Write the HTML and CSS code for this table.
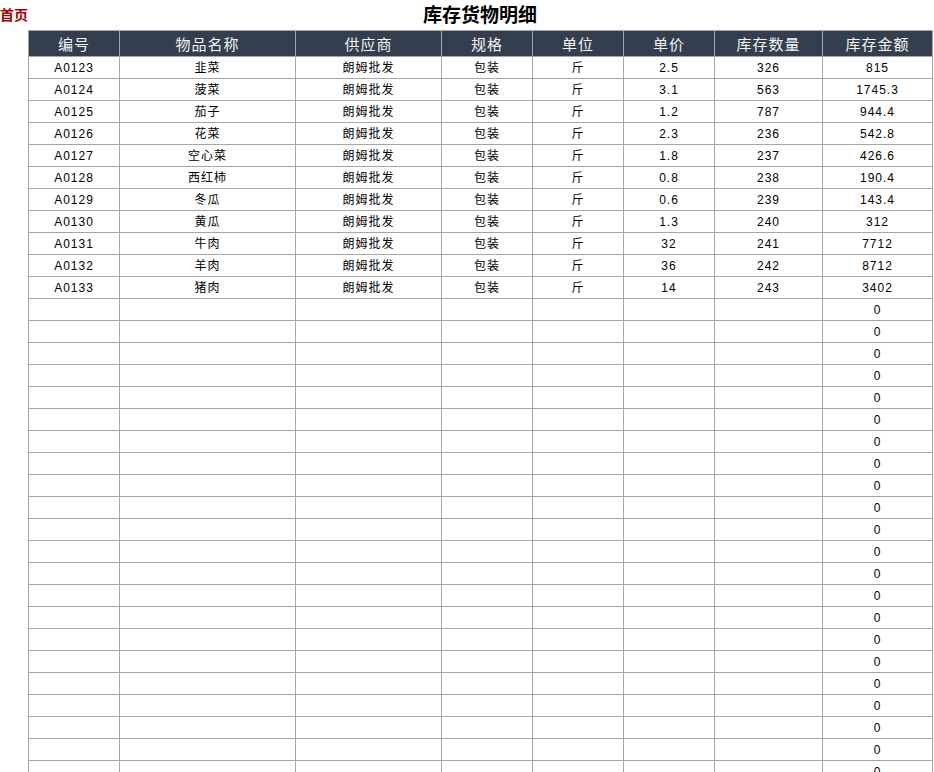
FILE: index.html
```html
<!DOCTYPE html>
<html lang="zh">
<head>
<meta charset="utf-8">
<title>库存货物明细</title>
<link rel="stylesheet" href="styles.css">
</head>
<body>
<div class="top">
  <a class="home" href="#">首页</a>
  <h1 class="title">库存货物明细</h1>
</div>
<table class="sheet">
  <colgroup>
    <col class="c1"><col class="c2"><col class="c3"><col class="c4"><col class="c5"><col class="c6"><col class="c7"><col class="c8">
  </colgroup>
  <thead>
    <tr><th>编号</th><th>物品名称</th><th>供应商</th><th>规格</th><th>单位</th><th>单价</th><th>库存数量</th><th>库存金额</th></tr>
  </thead>
  <tbody>
    <tr><td>A0123</td><td>韭菜</td><td>朗姆批发</td><td>包装</td><td>斤</td><td>2.5</td><td>326</td><td>815</td></tr>
    <tr><td>A0124</td><td>菠菜</td><td>朗姆批发</td><td>包装</td><td>斤</td><td>3.1</td><td>563</td><td>1745.3</td></tr>
    <tr><td>A0125</td><td>茄子</td><td>朗姆批发</td><td>包装</td><td>斤</td><td>1.2</td><td>787</td><td>944.4</td></tr>
    <tr><td>A0126</td><td>花菜</td><td>朗姆批发</td><td>包装</td><td>斤</td><td>2.3</td><td>236</td><td>542.8</td></tr>
    <tr><td>A0127</td><td>空心菜</td><td>朗姆批发</td><td>包装</td><td>斤</td><td>1.8</td><td>237</td><td>426.6</td></tr>
    <tr><td>A0128</td><td>西红柿</td><td>朗姆批发</td><td>包装</td><td>斤</td><td>0.8</td><td>238</td><td>190.4</td></tr>
    <tr><td>A0129</td><td>冬瓜</td><td>朗姆批发</td><td>包装</td><td>斤</td><td>0.6</td><td>239</td><td>143.4</td></tr>
    <tr><td>A0130</td><td>黄瓜</td><td>朗姆批发</td><td>包装</td><td>斤</td><td>1.3</td><td>240</td><td>312</td></tr>
    <tr><td>A0131</td><td>牛肉</td><td>朗姆批发</td><td>包装</td><td>斤</td><td>32</td><td>241</td><td>7712</td></tr>
    <tr><td>A0132</td><td>羊肉</td><td>朗姆批发</td><td>包装</td><td>斤</td><td>36</td><td>242</td><td>8712</td></tr>
    <tr><td>A0133</td><td>猪肉</td><td>朗姆批发</td><td>包装</td><td>斤</td><td>14</td><td>243</td><td>3402</td></tr>
    <tr><td></td><td></td><td></td><td></td><td></td><td></td><td></td><td>0</td></tr>
    <tr><td></td><td></td><td></td><td></td><td></td><td></td><td></td><td>0</td></tr>
    <tr><td></td><td></td><td></td><td></td><td></td><td></td><td></td><td>0</td></tr>
    <tr><td></td><td></td><td></td><td></td><td></td><td></td><td></td><td>0</td></tr>
    <tr><td></td><td></td><td></td><td></td><td></td><td></td><td></td><td>0</td></tr>
    <tr><td></td><td></td><td></td><td></td><td></td><td></td><td></td><td>0</td></tr>
    <tr><td></td><td></td><td></td><td></td><td></td><td></td><td></td><td>0</td></tr>
    <tr><td></td><td></td><td></td><td></td><td></td><td></td><td></td><td>0</td></tr>
    <tr><td></td><td></td><td></td><td></td><td></td><td></td><td></td><td>0</td></tr>
    <tr><td></td><td></td><td></td><td></td><td></td><td></td><td></td><td>0</td></tr>
    <tr><td></td><td></td><td></td><td></td><td></td><td></td><td></td><td>0</td></tr>
    <tr><td></td><td></td><td></td><td></td><td></td><td></td><td></td><td>0</td></tr>
    <tr><td></td><td></td><td></td><td></td><td></td><td></td><td></td><td>0</td></tr>
    <tr><td></td><td></td><td></td><td></td><td></td><td></td><td></td><td>0</td></tr>
    <tr><td></td><td></td><td></td><td></td><td></td><td></td><td></td><td>0</td></tr>
    <tr><td></td><td></td><td></td><td></td><td></td><td></td><td></td><td>0</td></tr>
    <tr><td></td><td></td><td></td><td></td><td></td><td></td><td></td><td>0</td></tr>
    <tr><td></td><td></td><td></td><td></td><td></td><td></td><td></td><td>0</td></tr>
    <tr><td></td><td></td><td></td><td></td><td></td><td></td><td></td><td>0</td></tr>
    <tr><td></td><td></td><td></td><td></td><td></td><td></td><td></td><td>0</td></tr>
    <tr><td></td><td></td><td></td><td></td><td></td><td></td><td></td><td>0</td></tr>
    <tr><td></td><td></td><td></td><td></td><td></td><td></td><td></td><td>0</td></tr>
  </tbody>
</table>
</body>
</html>
```

FILE: styles.css
```css
html, body {
  margin: 0;
  padding: 0;
  background: #fff;
  overflow: hidden;
  height: 772px;
}
body {
  font-family: "Liberation Sans", "Noto Sans CJK SC", sans-serif;
  color: #000;
}
.top {
  display: flex;
  align-items: center;
  height: 30px;
  width: 932px;
}
.home {
  width: 28px;
  align-self: flex-start;
  padding-top: 5px;
  font-size: 14px;
  font-weight: bold;
  color: #a00000;
  text-decoration: none;
  font-family: "Noto Sans CJK SC", sans-serif;
  line-height: 18px;
  white-space: nowrap;
}
.title {
  flex: 1;
  margin: 0;
  text-align: center;
  font-size: 19px;
  font-weight: bold;
  font-family: "Noto Sans CJK SC", sans-serif;
  line-height: 28px;
  padding-bottom: 2px;
}
.sheet {
  margin-left: 28px;
  border-collapse: collapse;
  table-layout: fixed;
  width: 905px;
}
.c1 { width: 91px; }
.c2 { width: 176px; }
.c3 { width: 146px; }
.c4 { width: 91px; }
.c5 { width: 91px; }
.c6 { width: 91px; }
.c7 { width: 108px; }
.c8 { width: 110px; }
.sheet th {
  height: 25px;
  padding: 0;
  background: #333f4f;
  color: #f4f4f4;
  font-weight: normal;
  font-size: 15px;
  letter-spacing: 1px;
  font-family: "Noto Sans CJK SC", sans-serif;
  border: 1px solid #a6a6a6;
  text-align: center;
}
.sheet td {
  height: 19px;
  padding: 2px 0 0;
  border: 1px solid #a6a6a6;
  text-align: center;
  font-size: 12px;
  letter-spacing: 1px;
  line-height: 19px;
  white-space: nowrap;
}
```
